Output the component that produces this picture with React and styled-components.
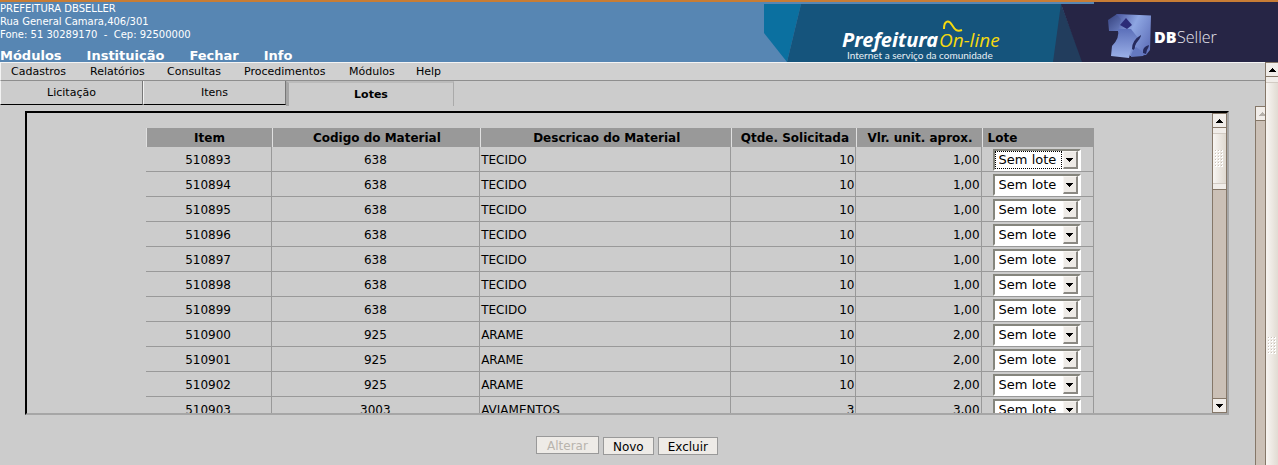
import React, { useState } from 'react';
import styled, { createGlobalStyle, css } from 'styled-components';

const Global = createGlobalStyle`
  * { box-sizing: border-box; }
  body { margin: 0; background: #ccc; color: #000; font: 12px/16px "DejaVu Sans", Verdana, sans-serif; overflow: hidden; }
`;

const Page = styled.div`
  display: flex;
  flex-direction: column;
  height: 100vh;
  overflow: hidden;
`;

const Banner = styled.header`
  display: flex;
  justify-content: space-between;
  height: 62px;
  flex: none;
  border-top: 2px solid #c87d35;
  background: #5786b3;
  color: #fff;
`;

const BannerText = styled.div`
  display: flex;
  flex-direction: column;
  justify-content: space-between;
`;

const Address = styled.address`
  font-style: normal;
  font-size: 10px;
  line-height: 13px;
  white-space: pre;
`;

const MainNav = styled.nav`
  display: flex;
  gap: 25px;
  font-size: 13px;
  line-height: 12px;
  font-weight: bold;
`;

const NavLink = styled.a`
  color: inherit;
  text-decoration: none;
`;

const Art = styled.svg`
  display: block;
  flex: none;
  height: 60px;
`;

const Body = styled.div`
  display: flex;
  flex: 1;
  min-height: 0;
`;

const Main = styled.div`
  display: flex;
  flex-direction: column;
  flex: 1;
  min-width: 0;
`;

const MenuBar = styled.nav`
  display: flex;
  flex: none;
  height: 19px;
  padding-left: 10px;
  border: solid #f4f4f4;
  border-width: 1px 0 0 1px;
  border-bottom: 1px solid #8e8e8e;
  background: #d0d0d0;
  font-size: 11px;
  line-height: 17px;
`;

const MenuLink = styled(NavLink)`
  width: ${p => p.$width}px;
`;

const Tabs = styled.div`
  display: flex;
  flex: none;
  height: 25px;
`;

const Tab = styled.button`
  width: 143px;
  height: 24px;
  padding: 0;
  border: solid;
  border-width: 0 1px 1px;
  border-color: #000 #777 #000 #f2f2f2;
  background: #ccc;
  color: #000;
  font: 11px/16px "DejaVu Sans", Verdana, sans-serif;
  ${p => p.$active && css`
    width: 168px;
    height: 25px;
    border-color: #bbb #aaa #ccc #a6a6a6;
    border-width: 2px 1px 0 3px;
    font-weight: bold;
  `}
`;

const Frame = styled.div`
  display: flex;
  flex: 1;
  min-height: 0;
`;

const Content = styled.main`
  display: flex;
  flex-direction: column;
  flex: 1;
  min-width: 0;
  padding: 5px 26px 10px 25px;
`;

const ListBox = styled.section`
  display: flex;
  flex: 1;
  min-height: 0;
  border: 2px solid;
  border-color: #000 #a6a6a6 #a6a6a6 #000;
`;

const ListView = styled.div`
  flex: 1;
  min-width: 0;
  overflow: hidden;
  padding-top: 15px;
`;

const Table = styled.table`
  width: 80%;
  margin: 0 auto;
  table-layout: fixed;
  border-collapse: separate;
  border-spacing: 0;
`;

const Col = styled.col`
  width: ${p => p.$width};
`;

const HeadCell = styled.th`
  height: 19px;
  padding: 1px 4px 0 5px;
  border-left: 1px solid #e0e0e0;
  background: #999;
  line-height: 16px;
  white-space: nowrap;
  text-align: ${p => p.$align || 'center'};
`;

const Cell = styled.td`
  height: 25px;
  padding: 2px 1px 0;
  border: solid #999;
  border-width: 0 1px 1px 0;
  text-align: ${p => p.$align || 'center'};
`;

const SelectWrap = styled.span`
  display: grid;
  grid-template-columns: 1fr 17px;
  grid-template-rows: 18px;
  width: 88px;
  height: 22px;
  margin-left: 10px;
  border: 2px solid;
  border-color: #85857d #fff #fff #85857d;
  background: #fff;
`;

const Select = styled.select`
  grid-area: 1 / 1 / 2 / 3;
  width: 100%;
  height: 18px;
  padding: 0 0 0 4px;
  border: 0;
  appearance: none;
  background: transparent;
  color: #000;
  font: 13px/18px "DejaVu Sans", Verdana, sans-serif;
`;

const Focus = styled.span`
  grid-area: 1 / 1;
  border: 1px dotted #000;
  pointer-events: none;
`;

const DropButton = styled.span`
  grid-area: 1 / 2;
  display: flex;
  align-items: center;
  justify-content: center;
  width: 15px;
  margin-left: 1px;
  border: 2px solid;
  border-color: #f8f6f3 #8b8983 #8b8983 #f8f6f3;
  border-top-width: 1px;
  border-left-width: 1px;
  background: #eeebe7;
  pointer-events: none;
`;

const Actions = styled.div`
  display: flex;
  flex: none;
  justify-content: center;
  gap: 4px;
  padding-top: 21px;
`;

const Action = styled.button`
  height: 18px;
  margin-top: 1px;
  padding: 1px 9px 0;
  border: 1px solid #999;
  background: #eeebe7;
  color: #000;
  font: 12px/16px "DejaVu Sans", Verdana, sans-serif;
  &:disabled { margin-top: 0; padding: 1px 10px 0; color: #b8b4ad; }
`;

const Track = styled.div`
  display: flex;
  flex-direction: column;
  flex: none;
  width: ${p => p.$width}px;
  border: solid #857768;
  border-width: 0 ${p => (p.$cut ? 0 : 1)}px 0 1px;
  background: #cbc0b6;
  overflow: hidden;
`;

const Arrow = styled.button`
  display: flex;
  flex: none;
  align-items: center;
  justify-content: center;
  width: 13px;
  height: 15px;
  padding: 0;
  border: solid #857768;
  border-width: 1px 0;
  background: #f1ede9;
  color: ${p => (p.disabled ? '#b5b0aa' : '#000')};
`;

const Thumb = styled.div`
  display: flex;
  flex: none;
  align-items: center;
  justify-content: center;
  width: 13px;
  height: ${p => p.$height};
  border-bottom: 1px solid #857768;
  background: linear-gradient(90deg, #f8f5f2, #dfd9d0);
  box-shadow: inset 0 5px #f1ede9, inset 0 6px #d2cbc3, inset 0 -5px #f1ede9, inset 0 -6px #d2cbc3;
`;

const Spacer = styled.div`
  flex: 1;
`;

const Triangle = ({ down }) => (
  <svg width="7" height="4" viewBox="0 0 7 4" aria-hidden="true">
    <path fill="currentColor" shapeRendering="crispEdges" d={down ? 'M0 0H7L4 4H3Z' : 'M0 4H7L4 0H3Z'} />
  </svg>
);

const Grip = () => (
  <svg width="9" height="18" viewBox="0 0 9 18" aria-hidden="true">
    <defs>
      <pattern id="grip" width="3" height="3" patternUnits="userSpaceOnUse">
        <path d="M0 0H2V2H0Z" fill="#fff" />
        <path d="M0 0H1V1H0Z" fill="#c9c1b8" />
      </pattern>
    </defs>
    <rect width="9" height="18" fill="url(#grip)" />
  </svg>
);

function BannerArt() {
  return (
    <Art width="514" height="60" viewBox="764 2 514 60" role="img" aria-label="Prefeitura On-line, DBSeller">
      <defs>
        <linearGradient id="face" x1="0" y1="0" x2="1" y2=".6">
          <stop offset="0" stopColor="#46529c" />
          <stop offset=".5" stopColor="#8ea6e2" />
          <stop offset="1" stopColor="#6577bf" />
        </linearGradient>
        <linearGradient id="side" x1="0" y1="0" x2="1" y2="1">
          <stop offset="0" stopColor="#34407c" />
          <stop offset="1" stopColor="#7186c9" />
        </linearGradient>
        <linearGradient id="foot" x1="0" y1="0" x2="0" y2="1">
          <stop offset="0" stopColor="#5c70ba" />
          <stop offset="1" stopColor="#9bb0e8" />
        </linearGradient>
      </defs>
      <path d="M764 4H801L787 62L764 33Z" fill="#0b70a0" />
      <path d="M801 4H1062V62H787Z" fill="#15547c" />
      <path d="M1020 4H1061L1054 62H1020Z" fill="#14587f" />
      <path d="M1061 4L1083 62H1053Z" fill="#223d5d" />
      <path d="M1061 4H1094V2H1278V62H1082Z" fill="#262545" />
      <g fontFamily="'Open Sans', sans-serif">
        <text x="842" y="47" fill="#fff" fontFamily="'Noto Sans', sans-serif" fontSize="20" fontWeight="700" fontStyle="italic">Prefeitura</text>
        <text x="939" y="47" fill="#f5d90f" fontSize="19" fontStyle="italic">On-line</text>
        <text x="847" y="59" fill="#e8f0f5" fontFamily="Lato, sans-serif" fontSize="10">Internet a serviço da comunidade</text>
        <text x="1154" y="43" fill="#fff" fontSize="16" fontWeight="800">DB</text>
        <text x="1177" y="43" fill="#e8e8f0" fontSize="16" fontWeight="300">Seller</text>
      </g>
      <path d="M944 29C944 20 949 20 952 25S957 32 962 30" fill="none" stroke="#f5d90f" strokeWidth="2" />
      <path d="M1108 20L1117 14L1126 15V31H1109Z" fill="url(#side)" />
      <path d="M1116 14L1151 15.500L1150 50L1146 55L1130 56L1118 31L1121 19Z" fill="url(#face)" />
      <path d="M1118 29Q1120 38 1112 46L1111 56L1129 58Q1131 46 1138 38L1131 29Z" fill="url(#foot)" />
      <path d="M1120 25L1126 18L1132 25L1127 29Z" fill="#2c2b78" />
      <path d="M1132 49Q1132 40 1141 35Q1141 37 1138 41Q1134 45 1135 51Z" fill="#262a5c" />
      <path d="M1131 57Q1131 52 1136 47L1143 52Q1144 46 1149 44Q1150 46 1147 51L1143 56Z" fill="#6478c0" />
      <path d="M1143 53Q1142 47 1149 45Q1149 47 1147 50L1146 54Z" fill="#262a5c" />
    </Art>
  );
}

const navItems = ['Módulos', 'Instituição', 'Fechar', 'Info'];
const menuItems = [['Cadastros', 79], ['Relatórios', 77], ['Consultas', 77], ['Procedimentos', 105], ['Módulos', 67], ['Help', 40]];
const columns = [
  ['Item', '13.3%'], ['Codigo do Material', '22%'], ['Descricao do Material', '26.5%'],
  ['Qtde. Solicitada', '13.2%'], ['Vlr. unit. aprox.', '13.2%'], ['Lote', '11.8%', 'left'],
];
const materials = { 638: ['TECIDO', '10', '1,00'], 925: ['ARAME', '10', '2,00'], 3003: ['AVIAMENTOS', '3', '3,00'] };
const items = [638, 638, 638, 638, 638, 638, 638, 925, 925, 925, 3003].map((code, i) => ({
  id: 510893 + i, code, data: materials[code],
}));

function LotSelect({ id, focused }) {
  return (
    <SelectWrap>
      <Select aria-label={`Lote do item ${id}`}>
        <option>Sem lote</option>
      </Select>
      {focused && <Focus />}
      <DropButton><Triangle down /></DropButton>
    </SelectWrap>
  );
}

export default function App() {
  const [tab, setTab] = useState('Lotes');
  return (
    <Page>
      <Global />
      <Banner>
        <BannerText>
          <Address>{'PREFEITURA DBSELLER\nRua General Camara,406/301\nFone: 51 30289170  -  Cep: 92500000'}</Address>
          <MainNav>{navItems.map(n => <NavLink key={n} href="#">{n}</NavLink>)}</MainNav>
        </BannerText>
        <BannerArt />
      </Banner>
      <Body>
        <Main>
          <MenuBar>{menuItems.map(([n, w]) => <MenuLink key={n} href="#" $width={w}>{n}</MenuLink>)}</MenuBar>
          <Tabs>
            {['Licitação', 'Itens', 'Lotes'].map(n => (
              <Tab key={n} type="button" $active={tab === n} onClick={() => setTab(n)}>{n}</Tab>
            ))}
          </Tabs>
          <Frame>
            <Content>
              <ListBox>
                <ListView>
                  <Table>
                    <colgroup>{columns.map(([n, w]) => <Col key={n} $width={w} />)}</colgroup>
                    <thead>
                      <tr>{columns.map(([n, , a]) => <HeadCell key={n} $align={a}>{n}</HeadCell>)}</tr>
                    </thead>
                    <tbody>
                      {items.map(({ id, code, data: [name, qty, price] }, i) => (
                        <tr key={id}>
                          <Cell>{id}</Cell>
                          <Cell>{code}</Cell>
                          <Cell $align="left">{name}</Cell>
                          <Cell $align="right">{qty}</Cell>
                          <Cell $align="right">{price}</Cell>
                          <Cell $align="left"><LotSelect id={id} focused={i === 0} /></Cell>
                        </tr>
                      ))}
                    </tbody>
                  </Table>
                </ListView>
                <Track $width={15}>
                  <Arrow type="button" aria-label="Subir"><Triangle /></Arrow>
                  <Thumb $height="62px"><Grip /></Thumb>
                  <Spacer />
                  <Arrow type="button" aria-label="Descer"><Triangle down /></Arrow>
                </Track>
              </ListBox>
              <Actions>
                <Action type="button" disabled>Alterar</Action>
                <Action type="button">Novo</Action>
                <Action type="button">Excluir</Action>
              </Actions>
            </Content>
            <Track $width={10} $cut>
              <Arrow type="button" disabled aria-label="Subir"><Triangle /></Arrow>
            </Track>
          </Frame>
        </Main>
        <Track $width={13} $cut>
          <Arrow type="button" aria-label="Subir"><Triangle /></Arrow>
          <Thumb $height="538px"><Grip /></Thumb>
        </Track>
      </Body>
    </Page>
  );
}
